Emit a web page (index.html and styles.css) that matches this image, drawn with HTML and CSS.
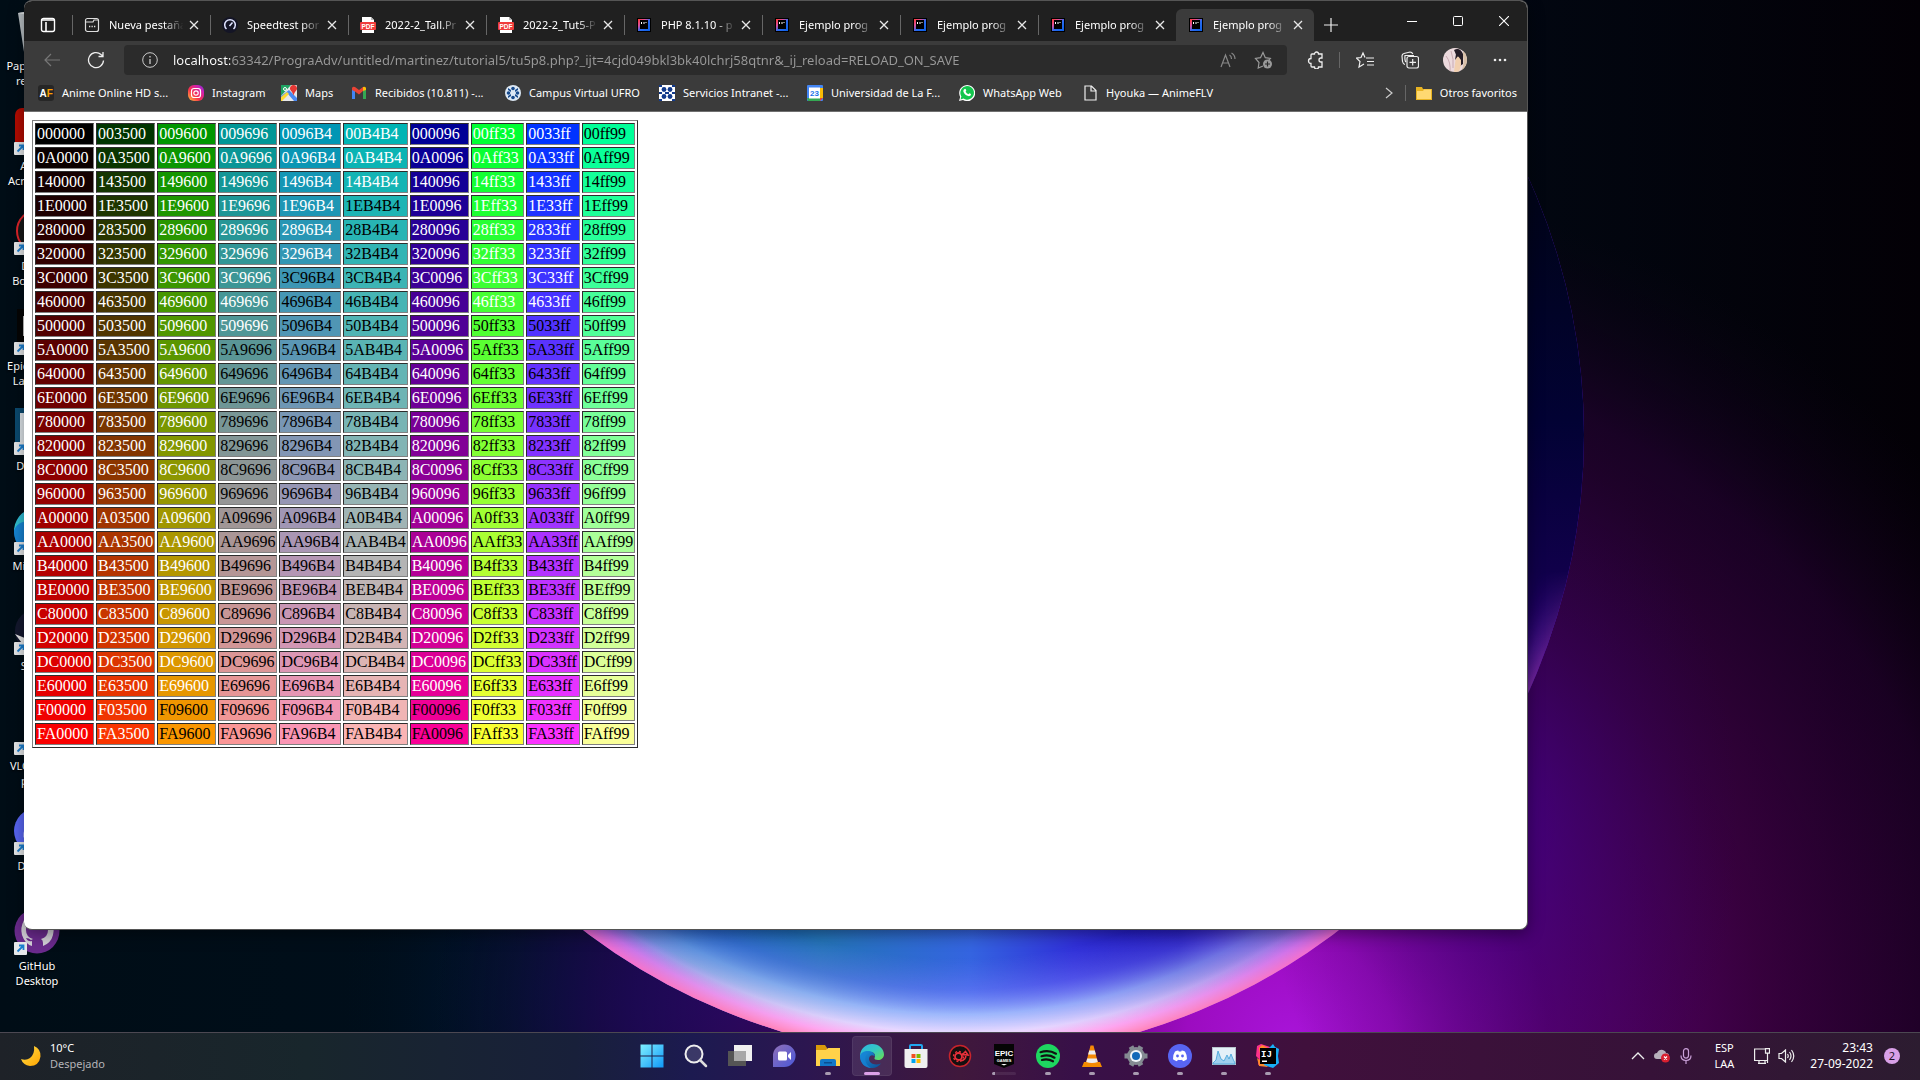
FILE: index.html
```html
<!DOCTYPE html>
<html lang="es">
<head>
<meta charset="utf-8">
<title>Ejemplo programa</title>
<link rel="stylesheet" href="styles.css">
</head>
<body>
<svg class="defs" width="0" height="0" aria-hidden="true">
  <defs>
    <linearGradient id="jb" x1="0" y1="0" x2="1" y2="1"><stop offset="0" stop-color="#ff3b30"/><stop offset=".3" stop-color="#e0509a"/><stop offset=".55" stop-color="#2a6cf0"/><stop offset="1" stop-color="#0a60e8"/></linearGradient>
    <symbol id="i-jb" viewBox="0 0 16 16"><rect x="1" y="1" width="14" height="14" fill="#000"/><path d="M2 2h12v12H2z" fill="url(#jb)"/><path d="M4 3h8v9H4z" fill="#000"/><path d="M5.500 5v2M8 5v2M10 5v1" stroke="#fff" stroke-width="1"/></symbol>
    <symbol id="i-pdf" viewBox="0 0 16 16"><path d="M2 0h9l3 3v13H2z" fill="#fff"/><path d="M11 0l3 3h-3z" fill="#bbb"/><rect y="5" width="16" height="8" rx="1" fill="#f03c3c"/><text x="8" y="11.500" font-size="6.500" font-weight="700" fill="#fff" text-anchor="middle" font-family="Liberation Sans, sans-serif">PDF</text></symbol>
    <symbol id="i-x" viewBox="0 0 10 10"><path d="M1 1l8 8M9 1L1 9" stroke="#e8e8e8" stroke-width="1.300" fill="none"/></symbol>
    <symbol id="i-link" viewBox="0 0 13 13"><rect width="13" height="13" rx="1" fill="#e6e8ea"/><path d="M3.500 9.500L9 4M5 3.500h4.500V8" stroke="#1b7fd0" stroke-width="1.800" fill="none"/></symbol>
    <symbol id="i-cone" viewBox="0 0 24 24"><path d="M4 18h16l2 5H2z" fill="#f48b00"/><path d="M10.500 1.500h3L18 19q-6 3-12 0z" fill="#f58a07"/><path d="M9.200 6.500h5.600l1.100 4H8.100zM7.200 14.500h9.600l1 3.500q-5.800 2-11.600 0z" fill="#eee"/></symbol>
    <linearGradient id="edgeA" x1="0" y1="0" x2="1" y2="1"><stop offset="0" stop-color="#2bb5e6"/><stop offset=".5" stop-color="#35c8c0"/><stop offset="1" stop-color="#6be04a"/></linearGradient>
    <linearGradient id="edgeB" x1="0" y1="0" x2="1" y2="1"><stop offset="0" stop-color="#1a93e0"/><stop offset="1" stop-color="#0a4f96"/></linearGradient>
    <symbol id="i-edge" viewBox="0 0 24 24"><path d="M0 11C1 4 6 0 12 0c7 0 12 5 12 10.500 0 3.500-3 5.500-6 5.500-2.500 0-4-1-3.500-2 1.500-2.500 0-6-4-6C6 8 2 9 0 13z" fill="url(#edgeA)"/><path d="M0 12C1 8 5 6.500 9 7c4 .5 6 3 5.800 5.500C12 10 9 12 9 15c0 4 5 7 12 4.500C19 22 16 24 12 24 5 24 0 19 0 12z" fill="url(#edgeB)"/><path d="M8 9C4 12 4 20 11 24 5 24 0 19 0 12c1-3 4-5 8-3z" fill="#1784d6" opacity=".7"/></symbol>
    <symbol id="i-discord" viewBox="0 0 24 24"><circle cx="12" cy="12" r="12" fill="#5865f2"/><path d="M7 7.500q2-1 3.300-1l.5.900h2.400l.5-.900q1.500 0 3.300 1 2.300 3.700 2 7.800-2 1.600-4 1.900l-.9-1.400q-2.100.6-4.200 0L9 17.200q-2-.3-4-1.900-.3-4.500 2-7.800z" fill="#fff"/><circle cx="9.500" cy="12" r="1.400" fill="#5865f2"/><circle cx="14.500" cy="12" r="1.400" fill="#5865f2"/></symbol>
  </defs>
</svg>

<div class="desktop">
  <svg class="wallpaper" viewBox="0 0 1920 1080" preserveAspectRatio="xMidYMid slice" aria-hidden="true">
    <defs>
      <linearGradient id="base" x1="0" x2="1"><stop offset="0" stop-color="#000d16"/><stop offset=".5" stop-color="#001020"/><stop offset="1" stop-color="#030006"/></linearGradient>
      <radialGradient id="glowL"><stop offset="0" stop-color="#0024c8"/><stop offset=".3" stop-color="#001a98" stop-opacity=".8"/><stop offset=".6" stop-color="#001c50" stop-opacity=".5"/><stop offset="1" stop-color="#001020" stop-opacity="0"/></radialGradient>
      <radialGradient id="glowR"><stop offset="0" stop-color="#a814d8"/><stop offset=".12" stop-color="#9c0cc0"/><stop offset=".3" stop-color="#640078" stop-opacity=".92"/><stop offset=".55" stop-color="#400046" stop-opacity=".85"/><stop offset=".8" stop-color="#280034" stop-opacity=".6"/><stop offset="1" stop-color="#100018" stop-opacity="0"/></radialGradient>
      <radialGradient id="glowV"><stop offset="0" stop-color="#3c0090" stop-opacity=".65"/><stop offset="1" stop-color="#200050" stop-opacity="0"/></radialGradient>
      <linearGradient id="inner" gradientUnits="userSpaceOnUse" x1="600" y1="930" x2="1340" y2="990"><stop offset="0" stop-color="#1830c0"/><stop offset=".12" stop-color="#0c5cb8"/><stop offset=".3" stop-color="#2474b8"/><stop offset=".5" stop-color="#3464e0"/><stop offset=".64" stop-color="#3030d8"/><stop offset=".78" stop-color="#1c10b8"/><stop offset="1" stop-color="#5818c8"/></linearGradient>
      <linearGradient id="shade" gradientUnits="userSpaceOnUse" x1="0" y1="200" x2="0" y2="940"><stop offset="0" stop-color="#00041a"/><stop offset=".3" stop-color="#020234"/><stop offset=".5" stop-color="#10004a"/><stop offset=".7" stop-color="#200060" stop-opacity=".8"/><stop offset="1" stop-color="#2000a0" stop-opacity="0"/></linearGradient>
      <radialGradient id="rim" gradientUnits="userSpaceOnUse" cx="961" cy="435" r="623"><stop offset=".84" stop-color="#7a80ff" stop-opacity="0"/><stop offset=".89" stop-color="#7a80ff" stop-opacity=".6"/><stop offset=".93" stop-color="#a8c0ff"/><stop offset=".96" stop-color="#e8d8ff"/><stop offset=".98" stop-color="#ffa8f0"/><stop offset="1" stop-color="#ff84b8"/></radialGradient>
      <radialGradient id="edgeRim" gradientUnits="userSpaceOnUse" cx="961" cy="435" r="623"><stop offset=".95" stop-color="#8010f0" stop-opacity="0"/><stop offset=".98" stop-color="#b040e8" stop-opacity=".8"/><stop offset="1" stop-color="#e858e8"/></radialGradient>
      <linearGradient id="fadeA" gradientUnits="userSpaceOnUse" x1="0" y1="860" x2="0" y2="1030"><stop offset="0" stop-color="#000"/><stop offset=".6" stop-color="#999"/><stop offset="1" stop-color="#fff"/></linearGradient>
      <linearGradient id="fadeB" gradientUnits="userSpaceOnUse" x1="0" y1="570" x2="0" y2="860"><stop offset="0" stop-color="#000"/><stop offset="1" stop-color="#fff"/></linearGradient>
      <mask id="mA"><rect width="1920" height="1080" fill="url(#fadeA)"/></mask>
      <mask id="mB"><rect width="1920" height="1080" fill="url(#fadeB)"/></mask>
    </defs>
    <rect width="1920" height="1080" fill="url(#base)"/>
    <ellipse cx="760" cy="1000" rx="420" ry="330" fill="url(#glowL)"/>
    <ellipse cx="1290" cy="1040" rx="860" ry="860" fill="url(#glowR)"/>
    <ellipse cx="1500" cy="820" rx="240" ry="380" fill="url(#glowV)"/>
    <circle cx="961" cy="435" r="623" fill="url(#inner)"/>
    <circle cx="961" cy="435" r="623" fill="url(#shade)"/>
    <circle cx="961" cy="435" r="623" fill="url(#edgeRim)" mask="url(#mB)"/>
    <circle cx="961" cy="435" r="623" fill="url(#rim)" mask="url(#mA)"/>
  </svg>

  <main class="workspace">
    <ul class="icons">
      <li><svg class="pic" viewBox="0 0 46 46"><path d="M4 5l20-3 16 4-4 38H10z" fill="#b9c0c4"/><path d="M4 5l20-3 16 4-16 3z" fill="#e4e8ea"/></svg><span>Papelera de reciclaje</span></li>
      <li><svg class="pic" viewBox="0 0 46 46"><rect x="1" width="44" height="44" rx="7" fill="#b30b00"/></svg><svg class="link"><use href="#i-link"/></svg><span>Adobe Acrobat DC</span></li>
      <li><svg class="pic" viewBox="0 0 46 46"><circle cx="24" cy="23" r="21" fill="#181818" stroke="#e0242a" stroke-width="2"/></svg><svg class="link"><use href="#i-link"/></svg><span>Driver Booster 9</span></li>
      <li><svg class="pic" viewBox="0 0 46 46"><path d="M3 1h40v38l-20 6-20-6z" fill="#050505"/><path d="M9 8h4v20H9z" fill="#ccc"/></svg><svg class="link"><use href="#i-link"/></svg><span>Epic Games Launcher</span></li>
      <li><svg class="pic" viewBox="0 0 46 46"><rect x="1" width="44" height="44" fill="#0b4a70"/><path d="M6 5h32v36H6z" fill="#dfe5ea"/></svg><svg class="link"><use href="#i-link"/></svg><span>Domino</span></li>
      <li><svg class="pic" viewBox="0 0 24 24"><use href="#i-edge"/></svg><svg class="link"><use href="#i-link"/></svg><span>Microsoft Edge</span></li>
      <li><svg class="pic" viewBox="0 0 46 46"><circle cx="23" cy="23" r="22" fill="#14182e"/><path d="M1 26l17 7 6 8-10 2z" fill="#e8e8e8"/></svg><svg class="link"><use href="#i-link"/></svg><span>Steam</span></li>
      <li><svg class="pic" viewBox="0 0 24 24"><use href="#i-cone"/></svg><svg class="link"><use href="#i-link"/></svg><span>VLC media player</span></li>
      <li><svg class="pic" viewBox="0 0 24 24"><use href="#i-discord"/></svg><svg class="link"><use href="#i-link"/></svg><span>Discord</span></li>
      <li><svg class="pic" viewBox="0 0 46 46"><circle cx="23" cy="23" r="22.500" fill="#6a2a8c"/><path d="M10 12q-4 8-2 15 3 9 10 11v-5q-4 1-6-3 3 0 5 2l2-1q-7-2-7-9 0-4 2-6l1-5 5 2q3-1 6 0l5-2 1 5q2 2 2 6 0 7-7 9 2 1 2 4v3q8-3 10-11 2-8-2-15z" fill="#d2cfd6"/></svg><svg class="link"><use href="#i-link"/></svg><span>GitHub Desktop</span></li>
    </ul>

    <section class="window">
      <header class="titlebar">
        <button class="space" aria-label="Áreas de trabajo"><svg width="16" height="16" viewBox="0 0 16 16"><rect x="1.500" y="1.500" width="13" height="13" rx="2" fill="none" stroke="#fff" stroke-width="1.400"/><path d="M1.500 3h13M6 5v9" stroke="#fff" stroke-width="1.600"/></svg></button>
        <div class="tabs" role="tablist">
          <div class="tab" role="tab"><svg class="fav" viewBox="0 0 16 16" fill="none" stroke="#ddd" stroke-width="1.200"><rect x="1.500" y="1.500" width="13" height="13" rx="2"/><path d="M2 5h7l1-2h4"/><path d="M5 9.500h1.300M7.500 9.500h1.300M10 9.500h1.300" stroke-width="1.600"/></svg><span>Nueva pestaña</span><button aria-label="Cerrar"><svg><use href="#i-x"/></svg></button></div>
          <div class="tab" role="tab"><svg class="fav" viewBox="0 0 16 16"><circle cx="8" cy="8" r="8" fill="#141526"/><path d="M4.500 12a5.300 5.300 0 1 1 7 0M7.500 9l3-3.500" fill="none" stroke="#dfe4ff" stroke-width="1.500"/></svg><span>Speedtest por</span><button aria-label="Cerrar"><svg><use href="#i-x"/></svg></button></div>
          <div class="tab" role="tab"><svg class="fav"><use href="#i-pdf"/></svg><span>2022-2_Tall.Pr</span><button aria-label="Cerrar"><svg><use href="#i-x"/></svg></button></div>
          <div class="tab" role="tab"><svg class="fav"><use href="#i-pdf"/></svg><span>2022-2_Tut5-P</span><button aria-label="Cerrar"><svg><use href="#i-x"/></svg></button></div>
          <div class="tab" role="tab"><svg class="fav"><use href="#i-jb"/></svg><span>PHP 8.1.10 - p</span><button aria-label="Cerrar"><svg><use href="#i-x"/></svg></button></div>
          <div class="tab" role="tab"><svg class="fav"><use href="#i-jb"/></svg><span>Ejemplo prog</span><button aria-label="Cerrar"><svg><use href="#i-x"/></svg></button></div>
          <div class="tab" role="tab"><svg class="fav"><use href="#i-jb"/></svg><span>Ejemplo prog</span><button aria-label="Cerrar"><svg><use href="#i-x"/></svg></button></div>
          <div class="tab" role="tab"><svg class="fav"><use href="#i-jb"/></svg><span>Ejemplo prog</span><button aria-label="Cerrar"><svg><use href="#i-x"/></svg></button></div>
          <div class="tab active" role="tab" aria-selected="true"><svg class="fav"><use href="#i-jb"/></svg><span>Ejemplo prog</span><button aria-label="Cerrar"><svg><use href="#i-x"/></svg></button></div>
        </div>
        <button class="newtab" aria-label="Nueva pestaña"><svg width="14" height="14" viewBox="0 0 14 14"><path d="M7 0v14M0 7h14" stroke="#eee" stroke-width="1.200"/></svg></button>
        <div class="caption">
          <button aria-label="Minimizar"><svg width="10" height="10" viewBox="0 0 10 10"><path d="M0 5.500h10" stroke="#fff"/></svg></button>
          <button aria-label="Maximizar"><svg width="10" height="10" viewBox="0 0 10 10"><rect x=".5" y=".5" width="9" height="9" rx="1" fill="none" stroke="#fff"/></svg></button>
          <button aria-label="Cerrar ventana"><svg width="10" height="10" viewBox="0 0 10 10"><path d="M0 0l10 10M10 0L0 10" stroke="#fff" stroke-width="1.100"/></svg></button>
        </div>
      </header>

      <div class="toolbar">
        <button class="nav" aria-label="Atrás"><svg width="16" height="14" viewBox="0 0 16 14"><path d="M7 1L1 7l6 6M1 7h15" fill="none" stroke="#777" stroke-width="1.200"/></svg></button>
        <button class="nav" aria-label="Actualizar"><svg width="18" height="18" viewBox="0 0 18 18"><path d="M16.500 9.500A7.500 7.500 0 1 1 14 3.500L16 5M16 1v4.500h-4.500" fill="none" stroke="#eee" stroke-width="1.300"/></svg></button>
        <div class="address">
          <svg width="16" height="16" viewBox="0 0 16 16" fill="none" stroke="#ccc"><circle cx="8" cy="8" r="7.300"/><path d="M8 7v5M8 4v1.500" stroke-width="1.300"/></svg>
          <input type="text" aria-label="Dirección" value="localhost:63342/PrograAdv/untitled/martinez/tutorial5/tu5p8.php?_ijt=4cjd049bkl3bk40lchrj58qtnr&amp;_ij_reload=RELOAD_ON_SAVE">
          <button aria-label="Leer en voz alta"><svg width="16" height="16" viewBox="0 0 16 16" fill="none" stroke="#888" stroke-width="1.200"><path d="M1 15L5.500 3 10 15M2.500 11h6M9.500 3q2 1 2 4M11.500 1q3.500 2 3.500 6"/></svg></button>
          <button aria-label="Agregar a favoritos"><svg width="18" height="18" viewBox="0 0 18 18" fill="none" stroke="#999" stroke-width="1.200"><path d="M9 15l-4.800 2 .8-5.500L1.500 7.500l5-.8L9 1.500l2.300 5.200 5 .8-1.500 1.500"/><circle cx="13.500" cy="13" r="4.500" fill="#999" stroke="none"/><path d="M13.500 10.500v5M11 13h5" stroke="#2b2b2b"/></svg></button>
        </div>
        <div class="tools">
          <button aria-label="Extensiones"><svg width="18" height="18" viewBox="0 0 18 18" fill="none" stroke="#eee" stroke-width="1.300"><path d="M5 3h2.500a2 2 0 0 1 4 0H15v4h-1a2 2 0 0 0 0 4h1v5h-3.500a2 2 0 0 1-4 0H5q-1 0-1-1v-2.500a2 2 0 0 1 0-5V4q0-1 1-1z"/></svg></button>
          <i class="bar"></i>
          <button aria-label="Favoritos"><svg width="18" height="18" viewBox="0 0 18 18" fill="none" stroke="#eee" stroke-width="1.200"><path d="M9 6.500L7 2 5 6.500l-4.500.6L4 10.500 3 16l5-3M10 7h8M11 10.500h7M11 14h7"/></svg></button>
          <button aria-label="Colecciones"><svg width="18" height="18" viewBox="0 0 18 18" fill="none" stroke="#eee" stroke-width="1.200"><path d="M4 13.500Q2 13 1.500 10.500L1 5q0-2 2-2.500L9 1q2 0 2.800 2M5 11Q3.500 9.500 4 4.500h9"/><rect x="6" y="5.500" width="11.500" height="11.500" rx="2"/><path d="M11.700 8v6.500M8.500 11.300H15"/></svg></button>
          <button aria-label="Perfil"><svg width="24" height="24" viewBox="0 0 24 24"><clipPath id="av"><circle cx="12" cy="12" r="12"/></clipPath><g clip-path="url(#av)"><rect width="24" height="24" fill="#ecdadd"/><path d="M11 2q6-3 9 4v10l-3 2-3-9z" fill="#241c26"/><path d="M20 0h4v24h-6q4-10 2-16z" fill="#d8c0a8"/><path d="M13 8l5 1v8l-2 7h-5l1-8z" fill="#f1cfae"/><path d="M13 6l-1 6 3-4 3 4 1 4 1-8-4-4z" fill="#241c26"/><path d="M3 8q5 6 4 16M8 3q3 8 2 17" stroke="#c9aab2" fill="none"/></g></svg></button>
          <button aria-label="Más"><svg width="14" height="4" viewBox="0 0 14 4" fill="#eee"><circle cx="2" cy="2" r="1.300"/><circle cx="7" cy="2" r="1.300"/><circle cx="12" cy="2" r="1.300"/></svg></button>
        </div>
      </div>

      <nav class="bookmarks">
        <div class="marks">
          <a href="#"><svg viewBox="0 0 16 16"><rect width="16" height="16" rx="3" fill="#262626"/><text x="1.500" y="12" font-size="10" font-weight="700" font-family="Liberation Sans, sans-serif" fill="#fff">A<tspan fill="#ffa000">F</tspan></text></svg><span>Anime Online HD s...</span></a>
          <a href="#"><svg viewBox="0 0 16 16"><defs><linearGradient id="ig" x1="0" y1="1" x2="1" y2="0"><stop offset="0" stop-color="#ffc83d"/><stop offset=".4" stop-color="#f8304a"/><stop offset=".75" stop-color="#d020b0"/><stop offset="1" stop-color="#7030e0"/></linearGradient></defs><rect width="16" height="16" rx="6" fill="url(#ig)"/><g fill="none" stroke="#fff" stroke-width="1.200"><rect x="3.500" y="3.500" width="9" height="9" rx="2.500"/><circle cx="8" cy="8" r="2.200"/></g></svg><span>Instagram</span></a>
          <a href="#"><svg viewBox="0 0 16 16"><rect width="16" height="16" rx="1" fill="#e8e8e8"/><path d="M0 0h10L0 11z" fill="#1ea362"/><path d="M0 11L8 5l8 8v3h-3L7 9l-7 7z" fill="#4a89f3"/><path d="M0 12l6-5 2 2-7 7H0z" fill="#fdd835"/><path d="M12.500 0a3.500 3.500 0 0 1 3.500 3.500c0 2-2.500 3-3.500 7-1-4-3.500-5-3.500-7A3.500 3.500 0 0 1 12.500 0z" fill="#e53935"/><circle cx="4" cy="4" r="1.500" fill="none" stroke="#fff"/></svg><span>Maps</span></a>
          <a href="#"><svg viewBox="0 0 16 16"><path d="M1 14V4l3 2v8z" fill="#4285f4"/><path d="M15 14V4l-3 2v8z" fill="#34a853"/><path d="M1 5V3q1-2 3-1l4 3 4-3v4L8 9.500 4 6.500z" fill="#ea4335"/><path d="M12 6V2q2-1 3 1v2z" fill="#fbbc04"/></svg><span>Recibidos (10.811) -...</span></a>
          <a href="#"><svg viewBox="0 0 16 16"><circle cx="8" cy="8" r="8" fill="#dce8f4"/><g fill="#174a8c"><circle cx="8" cy="3.500" r="1.800"/><circle cx="8" cy="12.500" r="1.800"/><circle cx="3.500" cy="8" r="1.800"/><circle cx="12.500" cy="8" r="1.800"/><path d="M3 3l3 2v2L3 5zM13 3l-3 2v2l3-2zM3 13l3-2V9l-3 2zM13 13l-3-2V9l3 2z"/></g></svg><span>Campus Virtual UFRO</span></a>
          <a href="#"><svg viewBox="0 0 16 16"><rect width="16" height="16" fill="#fff"/><g fill="#123a8c"><circle cx="5" cy="4.500" r="2.400"/><circle cx="11" cy="4.500" r="2.400"/><circle cx="5" cy="11.500" r="2.400"/><circle cx="11" cy="11.500" r="2.400"/><path d="M0 0h3v2H0zM13 0h3v2h-3zM0 14h3v2H0zM13 14h3v2h-3zM0 7h3v2H0zM13 7h3v2h-3zM6 7h4v2H6z"/></g></svg><span>Servicios Intranet -...</span></a>
          <a href="#"><svg viewBox="0 0 16 16"><rect width="16" height="16" rx="1" fill="#4285f4"/><path d="M13 3h3v10h-3z" fill="#fbbc04"/><path d="M0 13h13v3H1z" fill="#34a853"/><path d="M13 13h3l-3 3z" fill="#ea4335"/><rect x="2" y="2.500" width="11" height="11" fill="#fff"/><text x="7.500" y="11" font-size="8" font-weight="700" text-anchor="middle" font-family="Liberation Sans, sans-serif" fill="#1a73e8">23</text></svg><span>Universidad de La F...</span></a>
          <a href="#"><svg viewBox="0 0 16 16"><path d="M0 16l1.200-4A8 8 0 1 1 4 14.900z" fill="#fff"/><path d="M1.500 14.500l.9-3A6.800 6.800 0 1 1 4.500 13.600z" fill="#12c64d"/><path d="M5.500 4q1-.5 1.300.3l.5 1.400-.7 1q1 1.900 2.800 2.500l.9-1 1.700.9q.3 2-2 2.200Q5.200 10.300 4.300 6.300q0-1.500 1.200-2.300z" fill="#fff"/></svg><span>WhatsApp Web</span></a>
          <a href="#"><svg viewBox="0 0 16 16"><path d="M3 1h6.500L14 5.500V15H3zM9 1v5h5" fill="none" stroke="#eee" stroke-width="1.200"/></svg><span>Hyouka — AnimeFLV</span></a>
        </div>
        <button class="more" aria-label="Más favoritos"><svg width="8" height="12" viewBox="0 0 8 12"><path d="M1 1l6 5-6 5" fill="none" stroke="#ccc" stroke-width="1.200"/></svg></button>
        <i class="bar"></i>
        <a class="others" href="#"><svg viewBox="0 0 16 16"><path d="M0 2h6l1 2h9v11H0z" fill="#e8b322"/><path d="M1 6h6l1-1.500h7V14H1z" fill="#ffd971"/></svg><span>Otros favoritos</span></a>
      </nav>

      <div class="page">
        <table class="palette"><tbody id="palette"></tbody></table>
      </div>
    </section>
  </main>

  <footer class="taskbar">
    <button class="weather">
      <svg width="20" height="20" viewBox="0 0 20 20"><defs><linearGradient id="moon" x1="0" y1="0" x2="1" y2="1"><stop offset="0" stop-color="#ffe04a"/><stop offset="1" stop-color="#ffa400"/></linearGradient></defs><path d="M13 0q7 3 6.500 10.500Q18 20 9 20 2 19 0 13q5 2 9-1 5-4 4-12z" fill="url(#moon)"/></svg>
      <span class="lines"><span>10°C</span><span class="dim">Despejado</span></span>
    </button>
    <div class="apps">
      <button aria-label="Inicio"><svg viewBox="0 0 24 24"><defs><linearGradient id="win" x1="0" y1="0" x2="1" y2="1"><stop offset="0" stop-color="#7ff0ff"/><stop offset="1" stop-color="#1098f8"/></linearGradient></defs><path d="M.5.500h11v11H.5zM12.500.500h11v11h-11zM.5 12.500h11v11H.5zM12.500 12.500h11v11h-11z" fill="url(#win)"/></svg></button>
      <button aria-label="Buscar"><svg viewBox="0 0 24 24"><circle cx="10" cy="10" r="8.500" fill="#ffffff22" stroke="#eee" stroke-width="2"/><path d="M16 16l6 6" stroke="#ddd" stroke-width="2.500" stroke-linecap="round"/></svg></button>
      <button aria-label="Vista de tareas"><svg viewBox="0 0 24 24"><path d="M6 1h18v16H6z" fill="#f0f0f0"/><path d="M0 7h18v15H0z" fill="#555"/><path d="M6 7h12v10H6z" fill="#a8a8a8"/></svg></button>
      <button aria-label="Chat"><svg viewBox="0 0 24 24"><defs><linearGradient id="chat" x1="0" x2="1" y2="1"><stop offset="0" stop-color="#9070b8"/><stop offset="1" stop-color="#4a58d8"/></linearGradient></defs><path d="M1 23V12A11.300 11.300 0 1 1 12 23z" fill="url(#chat)"/><rect x="6" y="7.500" width="9" height="9" rx="1.500" fill="#fff"/><path d="M16 11l3-3v8l-3-3z" fill="#fff"/></svg></button>
      <button class="running" aria-label="Explorador"><svg viewBox="0 0 24 24"><path d="M0 1h9l2 3v4H0z" fill="#d99a0a"/><path d="M0 6h10l2-2h12v18H0z" fill="#ffd24a"/><path d="M4 22v-5q0-2 2-2h12q2 0 2 2v5z" fill="#1278c8"/><path d="M8 18h8v1.500H8z" fill="#0a4f90"/></svg></button>
      <button class="running current" aria-label="Edge"><svg><use href="#i-edge"/></svg></button>
      <button aria-label="Store"><svg viewBox="0 0 24 24"><path d="M6 7V2q0-1 1-1h10q1 0 1 1v5" fill="none" stroke="#20a8f0" stroke-width="2"/><path d="M.5 5h23v17q0 2-2 2h-19q-2 0-2-2z" fill="#f0f0f0"/><path d="M7.500 10h4v4h-4z" fill="#f25022"/><path d="M12.500 10h4v4h-4z" fill="#7fba00"/><path d="M7.500 15h4v4h-4z" fill="#00a4ef"/><path d="M12.500 15h4v4h-4z" fill="#ffb900"/></svg></button>
      <button aria-label="Driver Booster"><svg viewBox="0 0 24 24"><circle cx="12" cy="12" r="10.500" fill="#151010" stroke="#c8242c" stroke-width="1.500"/><circle cx="10.500" cy="12.500" r="3.500" fill="none" stroke="#e8303a" stroke-width="1.800"/><circle cx="10.500" cy="12.500" r="5" fill="none" stroke="#e8303a" stroke-width="1.400" stroke-dasharray="2 1.900"/><path d="M12 17q7-1 5.500-7M14.500 10.500l3-3 2.500 3.500z" fill="none" stroke="#e8303a" stroke-width="1.600"/></svg></button>
      <button class="loading" aria-label="Epic Games"><svg viewBox="0 0 24 24"><path d="M2 0h20v20l-10 4-10-4z" fill="#050505"/><text x="12" y="12" font-size="8" font-weight="700" text-anchor="middle" font-family="Liberation Sans, sans-serif" fill="#fff">EPIC</text><text x="12" y="17.500" font-size="4" font-weight="700" text-anchor="middle" font-family="Liberation Sans, sans-serif" fill="#fff">GAMES</text><path d="M9 20h6l-3 1.500z" fill="#fff"/></svg></button>
      <button class="running" aria-label="Spotify"><svg viewBox="0 0 24 24"><circle cx="12" cy="12" r="12" fill="#1ed760"/><path d="M4.500 8.200Q13 5.500 20 9.700M5.500 12.200q7.500-2 13 1.500M6 16q6-1.500 11 1.300" fill="none" stroke="#111" stroke-width="2.200" stroke-linecap="round"/></svg></button>
      <button class="running" aria-label="VLC"><svg><use href="#i-cone"/></svg></button>
      <button class="running" aria-label="Configuración"><svg viewBox="0 0 24 24"><circle cx="12" cy="12" r="9" fill="#848b92"/><g stroke="#848b92" stroke-width="5"><path d="M7 2.500l10 19M17 2.500l-10 19M.5 12h23"/></g><circle cx="12" cy="12" r="6" fill="#f0f4f8"/><circle cx="12" cy="12" r="4" fill="#1268b8"/></svg></button>
      <button class="running" aria-label="Discord"><svg><use href="#i-discord"/></svg></button>
      <button class="running" aria-label="Monitor"><svg viewBox="0 0 24 24"><rect y="3" width="24" height="18" fill="#b8c4cc"/><rect x="1" y="4" width="22" height="16" fill="#e4f0f8"/><path d="M1 19l3-3 2-9 3 8 3 2 3-6 2 4 2-5 2 5 2 4v1H1z" fill="#9fd0ee" stroke="#3fa0d8" stroke-width=".8"/></svg></button>
      <button class="running" aria-label="IntelliJ IDEA"><svg viewBox="0 0 24 24"><path d="M1 2l4-2 9 3-3 12-9 6 1-6-3-3z" fill="#ff318c"/><path d="M1 14l8 6 3 3-9-1z" fill="#ff8a2a"/><path d="M3 4l3-3 6 3-8 6z" fill="#ff8a2a"/><path d="M13 4l4-4 2 3 4 2-1 7 1 7-6 5-9-3z" fill="#18b0f8"/><path d="M4 4h16v16H4z" fill="#000"/><text x="5" y="13" font-size="9" font-weight="700" font-family="Liberation Mono, monospace" fill="#fff">IJ</text><path d="M6 16.500h5V18H6z" fill="#fff"/></svg></button>
    </div>
    <div class="tray">
      <button aria-label="Mostrar iconos ocultos"><svg width="14" height="8" viewBox="0 0 14 8"><path d="M1 7l6-6 6 6" fill="none" stroke="#eee" stroke-width="1.300"/></svg></button>
      <button aria-label="OneDrive"><svg width="16" height="14" viewBox="0 0 16 14"><path d="M3 10a3 3 0 0 1 0-6q2-4 6-3 3 1 3 3 3 0 3 3t-3 3z" fill="#b8b0bc"/><circle cx="11.500" cy="9" r="4.500" fill="#d82030"/><path d="M10 7.500l3 3M13 7.500l-3 3" stroke="#fff" stroke-width="1.200"/></svg></button>
      <button aria-label="Micrófono"><svg width="12" height="16" viewBox="0 0 12 16" fill="none" stroke="#c9a0d8" stroke-width="1.200"><rect x="3.500" y=".6" width="5" height="9.500" rx="2.500"/><path d="M1 7.500q0 5 5 5t5-5M6 12.500V16"/></svg></button>
      <button class="lang">ESP<br>LAA</button>
      <button aria-label="Red"><svg width="16" height="16" viewBox="0 0 16 16" fill="none" stroke="#eee" stroke-width="1.200"><path d="M11 1H.6v11.500h12.800M4 15.400h8M5 12.500v3M11 12.500v3M11.500.600h4v4.500h-4zM13.500 5v10"/></svg></button>
      <button aria-label="Volumen"><svg width="17" height="14" viewBox="0 0 17 14" fill="none" stroke="#eee" stroke-width="1.200"><path d="M1 4.500v5h2.500L7.500 13V1L3.500 4.500zM9.500 5q1.500 2 0 4M11.500 3q3 4 0 8M13.500 1q4.500 6 0 12"/></svg></button>
      <button class="clock">23:43<br>27-09-2022</button>
      <button class="badge">2</button>
    </div>
  </footer>
</div>
<script src="script.js"></script>
</body>
</html>
```

FILE: styles.css
```css
* { box-sizing: border-box; }
body { margin: 0; background: #000; font: 11px/16px "Noto Sans", "Open Sans", sans-serif; color: #fff; }
button { border: 0; padding: 0; background: none; color: inherit; font: inherit; display: flex; align-items: center; justify-content: center; }
a { color: inherit; text-decoration: none; }
svg { display: block; flex: none; }
.defs { position: absolute; }

.desktop { position: relative; min-height: 100vh; display: flex; flex-direction: column; overflow: hidden; }
.wallpaper { position: absolute; inset: 0; width: 100%; height: 100%; }
.workspace { position: relative; flex: 1; display: flex; }

.icons { list-style: none; margin: 0; padding: 8px 0 0; width: 74px; }
.icons li { position: relative; height: 100px; display: flex; flex-direction: column; align-items: center; gap: 4px; text-align: center; line-height: 15px; text-shadow: 0 1px 2px #000; }
.icons span { width: 66px; }
.pic { width: 46px; height: 46px; }
.link { position: absolute; left: 14px; top: 34px; width: 13px; height: 13px; }

.window { position: absolute; left: 24px; right: 392px; top: 0; bottom: 102px; display: flex; flex-direction: column; background: #fff; border: 1px solid #555; border-left: 0; border-radius: 8px; overflow: hidden; box-shadow: 0 4px 16px #0006; }

.titlebar { height: 40px; display: flex; background: #202020; }
.space { width: 48px; padding-top: 8px; }
.tabs { display: flex; align-items: flex-end; }
.tab { position: relative; width: 138px; height: 32px; display: flex; align-items: center; gap: 9px; padding: 0 8px 0 12px; }
.tab::before { content: ""; width: 1px; height: 20px; background: #666; position: absolute; left: 0; top: 6px; }
.tab.active { background: #3b3b3b; border-radius: 6px 6px 0 0; }
.tab.active::before { display: none; }
.tab span { flex: 1; margin-right: -8px; overflow: hidden; white-space: nowrap; -webkit-mask-image: linear-gradient(90deg, #000 72%, transparent 98%); mask-image: linear-gradient(90deg, #000 72%, transparent 98%); }
.tab button { width: 16px; height: 16px; }
.tab button svg { width: 10px; height: 10px; }
.fav { width: 16px; height: 16px; }
.newtab { width: 34px; padding-top: 8px; }
.caption { margin-left: auto; display: flex; }
.caption button { width: 46px; }

.toolbar { height: 38px; display: flex; align-items: center; background: #3b3b3b; padding: 0 5px 0 6px; }
.nav { width: 44px; height: 30px; }
.address { flex: 1; height: 30px; margin-left: 6px; padding: 0 14px 0 18px; border-radius: 4px; background: #2b2b2b; display: flex; align-items: center; gap: 15px; }
.address input { flex: 1; min-width: 0; border: 0; outline: 0; padding: 0; height: 30px; font: 13px/30px "Noto Sans", "Open Sans", sans-serif; color: transparent; background: linear-gradient(90deg, #fff 57px, #999 57px); -webkit-background-clip: text; background-clip: text; }
.address button { width: 20px; }
.tools { display: flex; align-items: center; padding-left: 6px; }
.tools button { width: 45px; height: 30px; }
.bar { width: 1px; height: 16px; background: #666; }
.tools .bar { margin: 0 2px 0 1px; }

.bookmarks { height: 33px; display: flex; align-items: center; background: #3b3b3b; border-bottom: 1px solid #707070; padding: 0 10px 4px 14px; }
.marks { flex: 1; display: grid; grid-template-columns: 150px 93px 70px 154px 154px 148px 152px 123px auto; overflow: hidden; }
.bookmarks a { display: flex; align-items: center; gap: 8px; white-space: nowrap; }
.bookmarks a svg { width: 16px; height: 16px; }
.more { width: 32px; }
.others { padding-left: 10px; }

.page { flex: 1; padding: 8px; overflow: hidden; }
.palette { border: 1px solid; border-color: #808080 #2c2c2c #2c2c2c #808080; border-spacing: 2px; color: #000; font: 16px/18px "Liberation Serif", "Times New Roman", serif; }
.palette td { padding: 1px; border: 1px solid; border-color: #2c2c2c #808080 #808080 #2c2c2c; }
.palette .light { color: #fff; }

.taskbar { position: relative; height: 48px; display: grid; grid-template-columns: 1fr auto 1fr; align-items: center; padding-bottom: 1px; border-top: 1px solid #4c4852; background: linear-gradient(90deg, #1e2228, #18262c 16%, #18203a 30%, #1c1a50 36%, #2c1650 42%, #40183c 50%, #381048 56%, #40103c 68%, #361238 86%, #2c1c30); }
.weather { justify-self: start; padding-left: 21px; gap: 9px; }
.lines { display: flex; flex-direction: column; align-items: flex-start; }
.dim { color: #b4b4b8; }
.apps { display: flex; gap: 4px; }
.apps button { position: relative; width: 40px; height: 40px; border-radius: 4px; }
.apps svg { width: 24px; height: 24px; }
.running::after, .loading::after { content: ""; position: absolute; bottom: 1px; left: 17px; width: 6px; height: 3px; border-radius: 2px; background: #a89ab0; }
.current { background: #ffffff18; box-shadow: inset 0 0 0 1px #ffffff10; }
.current::after { left: 12px; width: 16px; background: #dca0e8; }
.loading::after { left: 8px; width: 24px; background: linear-gradient(90deg, #a89ab0 3px, #ffffff14 3px); }
.tray { justify-self: end; display: flex; align-items: center; padding-right: 20px; }
.tray button { min-width: 24px; height: 40px; }
.tray .lang { margin: 0 14px; }
.tray .clock { margin-left: 12px; text-align: right; font-size: 12px; }
.tray .badge { min-width: 16px; width: 16px; height: 16px; margin-left: 11px; border-radius: 8px; background: #d9a0e8; color: #201028; }
```

FILE: script.js
```js
// Each column fixes green and blue; red grows by 10 on every row.
// The text is white above row `dark` and black from it on.
const columns = [
  { tail: "0000", dark: 26 },
  { tail: "3500", dark: 26 },
  { tail: "9600", dark: 24 },
  { tail: "9696", dark: 9 },
  { tail: "96B4", dark: 6 },
  { tail: "B4B4", dark: 3 },
  { tail: "0096", dark: 24 },
  { tail: "ff33", dark: 8 },
  { tail: "33ff", dark: 8 },
  { tail: "ff99", dark: 0 }
];
const body = document.getElementById("palette");
for (let row = 0; row < 26; row++) {
  const tr = body.insertRow();
  const red = (row * 10).toString(16).toUpperCase().padStart(2, "0");
  for (const { tail, dark } of columns) {
    const td = tr.insertCell();
    td.textContent = red + tail;
    td.style.backgroundColor = "#" + red + tail;
    if (row < dark) td.className = "light";
  }
}
```
